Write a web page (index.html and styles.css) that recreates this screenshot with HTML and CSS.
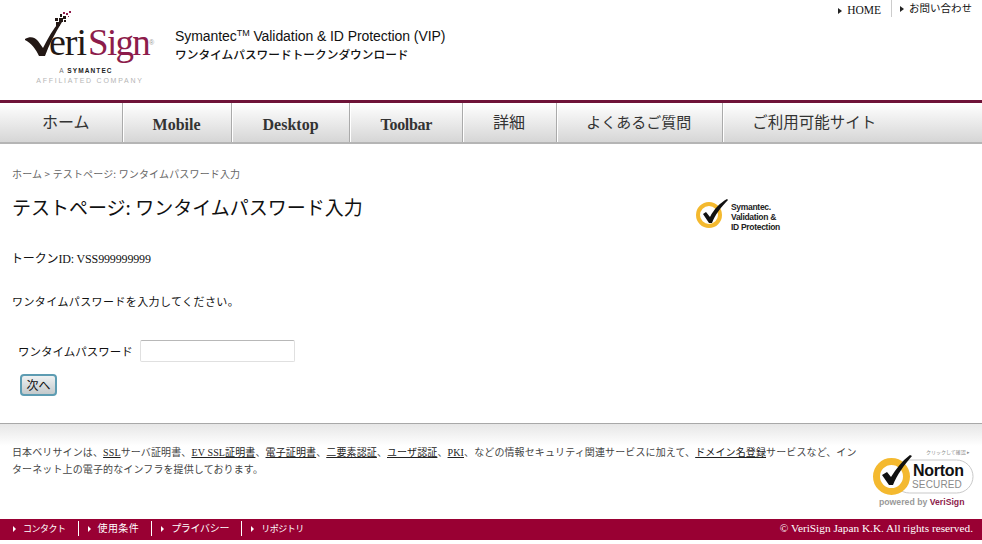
FILE: index.html
```html
<!DOCTYPE html>
<html lang="ja">
<head>
<meta charset="utf-8">
<title>テストページ: ワンタイムパスワード入力</title>
<link rel="stylesheet" href="styles.css">
</head>
<body>
<header class="masthead">
  <svg class="logo" width="134" height="82" viewBox="0 0 134 82" aria-label="VeriSign">
    <path d="M1 30 C6 27 11 28 14 32 L19 39 C24 29 29 20 36 12 L38 13 C31 24 25 36 21 47 L15 47 C12 40 7 34 1 31 Z" fill="#231815"/>
    <g fill="#231815">
      <rect x="32" y="13" width="4" height="4"/><rect x="35" y="9" width="4" height="4"/><rect x="31" y="9" width="3" height="3"/>
      <rect x="39" y="7" width="3" height="3"/><rect x="36" y="5" width="2" height="3"/><rect x="40" y="11" width="2" height="2"/>
    </g>
    <g fill="#8d1c4b">
      <rect x="42" y="4" width="2" height="2"/><rect x="39" y="3" width="2" height="2"/><rect x="45" y="2" width="2" height="2"/><rect x="44" y="7" width="1" height="1"/>
    </g>
    <text class="logo-eri" x="25" y="46">eri</text>
    <text class="logo-sign" x="64" y="46">Sign</text>
    <text class="logo-reg" x="125" y="36">®</text>
    <text class="logo-sym" x="62" y="64" text-anchor="middle">A <tspan class="logo-strong">SYMANTEC</tspan></text>
    <text class="logo-aff" x="66" y="74" text-anchor="middle">AFFILIATED COMPANY</text>
  </svg>
  <div class="site-title">
    <p class="site-title-en">Symantec<sup class="tm">TM</sup> Validation &amp; ID Protection (VIP)</p>
    <p class="site-title-ja">ワンタイムパスワードトークンダウンロード</p>
  </div>
  <ul class="util-links">
    <li class="util-item"><a class="util-link util-serif" href="#">HOME</a></li>
    <li class="util-item"><a class="util-link" href="#">お問い合わせ</a></li>
  </ul>
</header>

<nav class="gnav">
  <a class="gnav-item gnav-first" href="#">ホーム</a>
  <a class="gnav-item gnav-latin" href="#">Mobile</a>
  <a class="gnav-item gnav-latin" href="#">Desktop</a>
  <a class="gnav-item gnav-latin gnav-tight" href="#">Toolbar</a>
  <a class="gnav-item gnav-shift" href="#">詳細</a>
  <a class="gnav-item gnav-narrow" href="#">よくあるご質問</a>
  <a class="gnav-item gnav-last" href="#">ご利用可能サイト</a>
</nav>

<main class="content">
  <div class="intro">
    <div class="intro-text">
      <p class="crumbs">ホーム &gt; テストページ: ワンタイムパスワード入力</p>
      <h1 class="page-title">テストページ: ワンタイムパスワード入力</h1>
    </div>
    <svg class="vip-badge" width="88" height="38" viewBox="0 0 88 38" aria-label="Symantec Validation &amp; ID Protection">
      <circle cx="13" cy="20" r="11" fill="none" stroke="#f4b92f" stroke-width="4"/>
      <path d="M7 19 L10 17 L14 22 C18 14 24 8 31 4 L32 5 C25 12 19 20 16 28 L13 28 Z" fill="#111"/>
      <text class="vip-text" x="35" y="15">Symantec.</text>
      <text class="vip-text" x="35" y="25">Validation &amp;</text>
      <text class="vip-text" x="35" y="35">ID Protection</text>
    </svg>
  </div>
  <p class="token">トークンID: VSS999999999</p>
  <p class="prompt">ワンタイムパスワードを入力してください。</p>
  <form class="otp-form">
    <label class="otp-row">
      <span class="otp-label">ワンタイムパスワード</span>
      <input class="otp-input" type="text">
    </label>
    <button class="next-btn" type="button">次へ</button>
  </form>
</main>

<section class="about">
  <p class="about-text">日本ベリサインは、<a class="about-link" href="#">SSL</a>サーバ証明書、<a class="about-link" href="#">EV SSL証明書</a>、<a class="about-link" href="#">電子証明書</a>、<a class="about-link" href="#">二要素認証</a>、<a class="about-link" href="#">ユーザ認証</a>、<a class="about-link" href="#">PKI</a>、などの情報セキュリティ関連サービスに加えて、<a class="about-link" href="#">ドメイン名登録</a>サービスなど、インターネット上の電子的なインフラを提供しております。</p>
  <svg class="norton" width="106" height="66" viewBox="0 0 106 66" aria-label="Norton Secured powered by VeriSign">
    <text class="norton-click" x="57" y="7">クリックして確認 ▸</text>
    <rect x="24" y="13" width="80" height="33" rx="16.5" fill="#fff" stroke="#c9c9c9" stroke-width="1"/>
    <circle cx="22.5" cy="29.5" r="15" fill="#fff" stroke="#f4b92f" stroke-width="7"/>
    <path d="M13 28 L18 25 L22 30 C27 22 33 14 41 8 L43 9 C35 18 28 28 24 38 L20 38 Z" fill="#111"/>
    <text class="norton-name" x="44" y="29">Norton</text>
    <text class="norton-sec" x="43" y="41">SECURED</text>
    <text class="norton-by" x="10" y="58">powered by <tspan class="norton-vs">VeriSign</tspan></text>
  </svg>
</section>

<footer class="footbar">
  <ul class="foot-links">
    <li class="foot-item"><a class="foot-link foot-tight" href="#">コンタクト</a></li>
    <li class="foot-item"><a class="foot-link foot-wide" href="#">使用条件</a></li>
    <li class="foot-item"><a class="foot-link foot-mid" href="#">プライバシー</a></li>
    <li class="foot-item"><a class="foot-link foot-tight" href="#">リポジトリ</a></li>
  </ul>
  <small class="copyright">© VeriSign Japan K.K. All rights reserved.</small>
</footer>
</body>
</html>
```
FILE: styles.css
```css
* { box-sizing: border-box; }
html, body { margin: 0; padding: 0; background: #fff; }
body {
  height: 544px;
  overflow: hidden;
  color: #111;
  font-family: "Liberation Serif", "Noto Sans CJK JP", serif;
  font-size: 12px;
}
p, h1, ul { margin: 0; padding: 0; }
ul { list-style: none; }
a { color: inherit; text-decoration: none; }

.masthead {
  height: 100px;
  display: flex;
  align-items: flex-start;
  padding-left: 24px;
}
.logo { margin-top: 9px; flex: none; }
.logo-eri { font: 38px "Liberation Serif", serif; fill: #231815; letter-spacing: -1px; }
.logo-sign { font: 37px "Liberation Serif", serif; fill: #8d1c4b; letter-spacing: -1.7px; }
.logo-reg { font: 7px "Liberation Sans", sans-serif; fill: #999; }
.logo-sym { font: 6.5px "Liberation Sans", sans-serif; fill: #777; letter-spacing: 1.1px; }
.logo-strong { font-weight: 700; fill: #222; }
.logo-aff { font: 7px "Liberation Sans", sans-serif; fill: #b5b5b5; letter-spacing: 1.75px; }

.site-title { margin: 28px 0 0 17px; color: #111; font-family: "Liberation Sans", "Noto Sans CJK JP", sans-serif; }
.site-title-en { font-size: 14px; line-height: 17px; letter-spacing: -.07px; white-space: nowrap; }
.tm { font-size: 9px; line-height: 0; vertical-align: 5px; }
.site-title-ja { margin-top: 1px; font-size: 11.7px; line-height: 17px; font-weight: 500; white-space: nowrap; }

.util-links { display: flex; margin-left: auto; padding-right: 10px; font-size: 10.5px; }
.util-item { height: 17px; padding-top: 2px; }
.util-item + .util-item { border-left: 1px solid #ccc; margin-left: 10px; padding-left: 8px; }
.util-link { display: block; line-height: 14px; color: #111; }
.util-link::before { content: ""; display: inline-block; border-left: 4px solid #222; border-top: 3px solid transparent; border-bottom: 3px solid transparent; margin-right: 5px; }
.util-serif { font-size: 11.5px; line-height: 15px; padding-top: 1px; }

.gnav {
  height: 44px;
  display: flex;
  border-top: 3px solid #6d1237;
  border-bottom: 2px solid #b5b5b5;
  background: linear-gradient(#fff, #d6d6d6);
  font-family: "Noto Sans CJK JP", "Liberation Serif", sans-serif;
  font-size: 16px;
  color: #333;
}
.gnav-item { padding: 0 30px; line-height: 37px; border-right: 1px solid #aaa; box-shadow: 1px 0 0 #fff; white-space: nowrap; margin-right: 1px; }
.gnav-first { padding-left: 42px; padding-right: 32px; margin-right: 0; }
.gnav-latin { font-family: "Liberation Serif", serif; font-weight: 700; font-size: 16px; line-height: 44px; }
.gnav-tight { letter-spacing: -.3px; }
.gnav-shift { padding-left: 29px; padding-right: 31px; }
.gnav-narrow { font-size: 15px; padding-left: 28px; padding-right: 31px; }
.gnav-last { border-right: 0; box-shadow: none; font-size: 15.5px; padding-left: 28px; }

.content { height: 279px; padding: 23px 12px 0; }
.intro { display: flex; }
.intro-text { width: 684px; flex: none; }
.crumbs { font-family: "Noto Sans CJK JP", sans-serif; font-size: 10px; line-height: 14px; letter-spacing: .15px; color: #666; }
.page-title { margin-top: 13px; font-family: "Noto Sans CJK JP", sans-serif; font-size: 19px; font-weight: 400; line-height: 26px; color: #111; white-space: nowrap; }
.vip-badge { margin-top: 28px; flex: none; }
.vip-text { font: 700 8.5px "Liberation Sans", sans-serif; fill: #222; letter-spacing: -.3px; }

.token { margin: 18px 0 0 -1px; font-size: 12px; line-height: 16px; letter-spacing: -.15px; }
.prompt { margin: 26px 0 0 0; font-family: "Noto Sans CJK JP", sans-serif; font-size: 11px; line-height: 16px; letter-spacing: .4px; }
.otp-form { margin: 0 0 0 5px; }
.otp-row { display: flex; align-items: center; margin-top: 31px; }
.otp-label { font-family: "Noto Sans CJK JP", sans-serif; font-size: 11.5px; width: 123px; padding-left: 1px; }
.otp-input { width: 155px; height: 22px; padding: 0 4px; border: 1px solid #e0e0e0; border-top-color: #b8b8b8; border-radius: 2px; background: #fff; }
.next-btn {
  display: block;
  width: 37px;
  height: 22px;
  margin: 12px 0 0 3px;
  padding: 0;
  border: 2px solid #5d9cb2;
  border-radius: 4px;
  background: linear-gradient(#eef1f2, #c3c9cb);
  font-family: "Noto Sans CJK JP", sans-serif;
  font-size: 12px;
  line-height: 16px;
  color: #111;
}

.about {
  height: 96px;
  display: flex;
  align-items: flex-start;
  border-top: 1px solid #a8a8a8;
  background: linear-gradient(#e6e6e6, #fff 22px);
  padding: 20px 7px 0 12px;
}
.about-text {
  width: 846px;
  flex: none;
  font-family: "Noto Sans CJK JP", sans-serif;
  font-size: 10px;
  line-height: 16px;
  letter-spacing: .12px;
  color: #444;
}
.about-link { font-family: "Liberation Serif", "Noto Sans CJK JP", serif; color: #222; text-decoration: underline; }
.norton { margin: 3px 0 0 11px; flex: none; }
.norton-click { font: 5px "Noto Sans CJK JP", sans-serif; fill: #888; }
.norton-name { font: 700 16px "Liberation Sans", sans-serif; fill: #111; letter-spacing: -.3px; }
.norton-sec { font: 10px "Liberation Sans", sans-serif; fill: #8a8a8a; letter-spacing: .15px; }
.norton-by { font: 700 8.7px "Liberation Sans", sans-serif; fill: #999; }
.norton-vs { fill: #8d1c4b; }

.footbar {
  height: 21px;
  display: flex;
  align-items: center;
  justify-content: space-between;
  padding: 0 9px 3px 13px;
  background: #990033;
  color: #fff;
}
.foot-links { display: flex; font-family: "Noto Sans CJK JP", sans-serif; font-size: 10px; }
.foot-item { line-height: 14px; }
.foot-item + .foot-item { border-left: 1px solid #fff; margin-left: 12px; padding-left: 9px; }
.foot-link::before { content: ""; display: inline-block; border-left: 3px solid #fff; border-top: 3px solid transparent; border-bottom: 3px solid transparent; margin-right: 7px; }
.foot-tight { font-size: 9px; letter-spacing: -.5px; }
.foot-wide { letter-spacing: .4px; }
.foot-mid { letter-spacing: -.3px; }
.copyright { font-family: "Liberation Serif", serif; font-size: 11.3px; }
```
